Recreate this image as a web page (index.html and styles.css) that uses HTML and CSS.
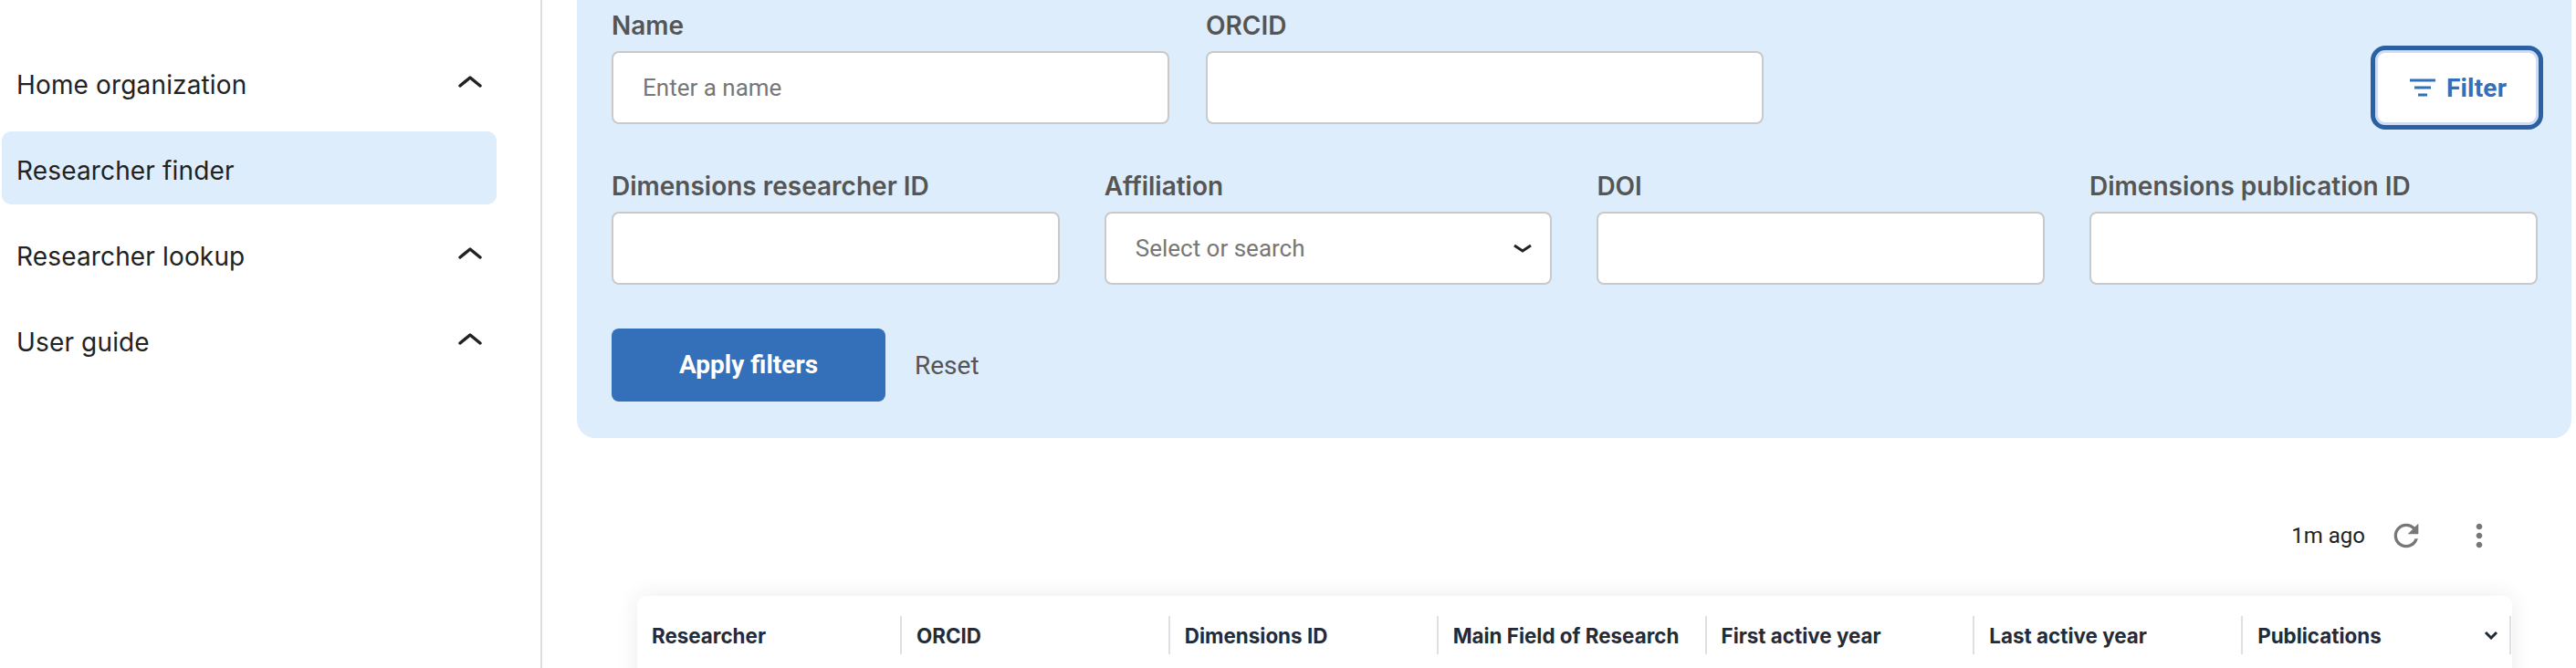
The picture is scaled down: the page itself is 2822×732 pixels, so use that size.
FILE: index.html
```html
<!DOCTYPE html>
<html lang="en">
<head>
<meta charset="utf-8">
<title>Researcher finder</title>
<link rel="stylesheet" href="styles.css">
</head>
<body>
<div class="app">
  <aside class="sidebar">
    <nav class="nav">
      <a class="nav-item"><span>Home organization</span><svg class="chev" viewBox="0 0 28 16"><path d="M3 13 14 4l11 9"/></svg></a>
      <a class="nav-item active"><span>Researcher finder</span></a>
      <a class="nav-item"><span>Researcher lookup</span><svg class="chev" viewBox="0 0 28 16"><path d="M3 13 14 4l11 9"/></svg></a>
      <a class="nav-item"><span>User guide</span><svg class="chev" viewBox="0 0 28 16"><path d="M3 13 14 4l11 9"/></svg></a>
    </nav>
  </aside>
  <main class="main">
    <section class="panel">
      <div class="row-top">
        <div class="field w-top"><label class="label">Name</label><input class="input" placeholder="Enter a name"></div>
        <div class="field w-top"><label class="label">ORCID</label><input class="input"></div>
        <button class="filter-btn"><svg class="filter-icon" viewBox="0 0 28 20"><path d="M0 2h28M5 10h18M9 18h10"/></svg>Filter</button>
      </div>
      <div class="row-four">
        <div class="field"><label class="label">Dimensions researcher ID</label><input class="input"></div>
        <div class="field"><label class="label">Affiliation</label>
          <div class="input select"><span>Select or search</span><svg class="sel-chev" viewBox="0 0 20 10"><path d="M1 2l9 6 9-6"/></svg></div>
        </div>
        <div class="field"><label class="label">DOI</label><input class="input"></div>
        <div class="field"><label class="label">Dimensions publication ID</label><input class="input"></div>
      </div>
      <div class="actions">
        <button class="apply">Apply filters</button>
        <button class="reset">Reset</button>
      </div>
    </section>
    <div class="toolbar">
      <span class="ago">1m ago</span>
      <svg class="tool-icon refresh" viewBox="0 0 24 24"><path d="M17.650 6.350C16.200 4.900 14.210 4 12 4c-4.420 0-7.990 3.580-7.990 8s3.570 8 7.990 8c3.730 0 6.840-2.550 7.730-6h-2.080c-.82 2.330-3.040 4-5.650 4-3.310 0-6-2.690-6-6s2.690-6 6-6c1.660 0 3.140.69 4.220 1.780L13 11h7V4l-2.350 2.350z"/></svg>
      <svg class="tool-icon dots" viewBox="0 0 24 24"><path d="M12 8c1.100 0 2-.9 2-2s-.9-2-2-2-2 .9-2 2 .9 2 2 2zm0 2c-1.100 0-2 .9-2 2s.9 2 2 2 2-.9 2-2-.9-2-2-2zm0 6c-1.100 0-2 .9-2 2s.9 2 2 2 2-.9 2-2-.9-2-2-2z"/></svg>
    </div>
    <div class="table">
      <div class="thead">
        <div class="th">Researcher</div>
        <div class="th">ORCID</div>
        <div class="th">Dimensions ID</div>
        <div class="th">Main Field of Research</div>
        <div class="th">First active year</div>
        <div class="th">Last active year</div>
        <div class="th th-last">Publications<svg class="th-chev" viewBox="0 0 16 10"><path d="M2 2l6 6 6-6"/></svg></div>
      </div>
    </div>
  </main>
</div>
</body>
</html>
```
FILE: styles.css
```css
* { box-sizing: border-box; }
html, body { margin: 0; height: 100%; overflow: hidden; background: #fff; }
body { font-family: Inter, "Noto Sans", sans-serif; color: #222; }
.app { display: flex; height: 732px; overflow: hidden; }
.sidebar { width: 594px; flex: none; border-right: 2px solid #ddd; padding: 50px 48px 0 2px; }
.nav { display: flex; flex-direction: column; gap: 14px; }
.nav-item { height: 80px; display: flex; align-items: center; justify-content: space-between; padding: 6px 15px 0 16px; font-size: 28px; letter-spacing: .15px; border-radius: 10px; color: #222; }
.nav-item.active { background: #ddedfc; }
.chev { width: 28px; height: 16px; margin-top: -9px; fill: none; stroke: #222; stroke-width: 3.500; stroke-linecap: round; stroke-linejoin: round; }
.main { flex: 1; min-width: 0; padding: 0 5px 0 38px; }
.panel { background: #ddedfc; border-radius: 0 0 20px 20px; padding: 12px 38px 40px; }
.row-top { display: flex; gap: 40px; align-items: flex-start; }
.w-top { width: 611px; }
.field { display: flex; flex-direction: column; gap: 12px; min-width: 0; }
.label { font-size: 28px; line-height: 32px; font-weight: 600; color: #555; }
.input { display: block; width: 100%; height: 80px; border: 2px solid #c9c9c9; border-radius: 8px; background: #fff; padding: 0 32px; font-family: Roboto, sans-serif; font-size: 26px; outline: none; }
.input::placeholder { color: #777; opacity: 1; }
.select { display: flex; align-items: center; justify-content: space-between; color: #777; padding-right: 20px; }
.sel-chev { width: 20px; height: 10px; fill: none; stroke: #222; stroke-width: 3; }
.filter-btn { margin-left: auto; margin-right: -7px; margin-top: 38px; width: 189px; height: 92px; display: flex; align-items: center; justify-content: center; gap: 12px; background: #fff; border: 5px solid #2b61a3; box-shadow: inset 0 0 0 3px #cfdcf6; border-radius: 16px; font-family: Roboto, sans-serif; font-size: 28px; letter-spacing: .2px; font-weight: 700; color: #3370b9; padding: 0 0 0 3px; }
.filter-icon { width: 28px; height: 20px; fill: none; stroke: #3370b9; stroke-width: 3; }
.row-four { display: grid; grid-template-columns: repeat(4, 490.700px); gap: 49px; margin-top: 46px; }
.actions { display: flex; align-items: center; gap: 32px; margin-top: 48px; }
.apply { width: 300px; height: 80px; background: #3370b9; color: #fff; border: 0; border-radius: 8px; font-family: Roboto, sans-serif; font-size: 28px; font-weight: 700; padding: 0 0 2px; }
.reset { background: none; border: 0; padding: 0; font-family: Roboto, sans-serif; font-size: 28px; color: #555; }
.toolbar { display: flex; align-items: center; justify-content: flex-end; height: 40px; margin-top: 87px; padding-right: 81px; }
.ago { font-family: Roboto, sans-serif; font-size: 24px; color: #222; }
.tool-icon { width: 40px; height: 40px; fill: #777; }
.refresh { margin-left: 25px; }
.dots { margin-left: 40px; }
.table { margin: 46px 65px 0 66px; height: 200px; background: #fff; border-radius: 10px 10px 0 0; box-shadow: 0 0 24px rgba(30, 40, 60, .09); }
.thead { display: grid; grid-template-columns: 290px repeat(6, 1fr); padding: 22px 1px 0 0; }
.th { height: 42px; display: flex; align-items: center; padding-left: 16px; border-right: 2px solid #dde0e4; font-size: 22.400px; font-weight: 700; color: #252b36; white-space: nowrap; }
.th-last { justify-content: space-between; padding-right: 12px; }
.th-chev { width: 16px; height: 10px; fill: none; stroke: #252b36; stroke-width: 3; }
```
